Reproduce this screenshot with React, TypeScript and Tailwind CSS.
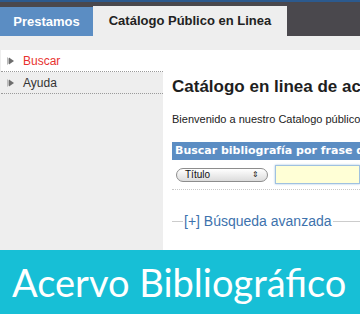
import React from "react";

function Arrow() {
  return (
    <svg width="10" height="10" viewBox="0 0 10 10" className="shrink-0">
      <polygon points="1,1 6,5 1,9" fill="#bbbbbb" />
      <polygon points="3,1.5 8,5 3,8.5" fill="#6d6d6d" />
    </svg>
  );
}

function SideItem({ label, active }: { label: string; active?: boolean }) {
  return (
    <div
      className={`h-[22px] flex items-center gap-[7px] pl-[5px] border-b border-dotted border-[#9a9a9a] text-[12px] ${
        active ? "bg-white text-[#e8322f]" : "text-[#333]"
      }`}
    >
      <Arrow />
      <span>{label}</span>
    </div>
  );
}

export default function App() {
  return (
    <div className="w-[360px] h-[314px] overflow-hidden flex flex-col bg-[#eeeeee] font-['Liberation_Sans',Arial,sans-serif]">
      {/* top tabs */}
      <div className="h-[36px] shrink-0 bg-[#4a484d] border-t-2 border-[#2c5a8e] flex items-end">
        <div className="w-[93px] h-[29px] bg-[#5b8dc3] flex items-center justify-center text-white font-bold text-[13px]">
          Prestamos
        </div>
        <div className="w-[194px] h-[30px] bg-[#eeeeee] flex items-center justify-center text-[#222] font-bold text-[13px]">
          Catálogo Público en Linea
        </div>
      </div>

      <div className="flex-1 flex pt-[14px] min-h-0">
        {/* sidebar */}
        <div className="w-[163px] shrink-0 pl-[1px]">
          <SideItem label="Buscar" active />
          <SideItem label="Ayuda" />
        </div>

        {/* content */}
        <div className="flex-1 bg-white pl-[9px] overflow-hidden">
          <h1 className="mt-[27px] text-[17px] font-bold text-[#1e1e1e] whitespace-nowrap leading-[20px]">
            Catálogo en linea de acervo bibliográfico
          </h1>
          <p className="mt-[15px] text-[11px] text-[#222] whitespace-nowrap leading-[14px]">
            Bienvenido a nuestro Catalogo público del acervo
          </p>
          <div className="mt-[16px] h-[18px] bg-[#5b8dc3] text-white font-bold text-[11px] font-['DejaVu_Sans',Verdana,sans-serif] pl-[3px] flex items-center whitespace-nowrap">
            Buscar bibliografía por frase de búsqueda
          </div>
          <div className="mt-[5px] flex items-center gap-[7px] pl-[4px] pb-[5px] border-b border-dotted border-[#c8c8c8]">
            <div className="w-[92px] h-[14px] rounded-full border border-[#8d8d8d] bg-gradient-to-b from-white to-[#dcdcdc] flex items-center justify-between px-[8px] text-[10px] text-[#111]">
              <span>Título</span>
              <span className="text-[8px] leading-none">⇕</span>
            </div>
            <div className="flex-1 h-[19px] bg-[#ffffd6] border border-[#9fc1e0] shadow-[0_0_2px_#9fc1e0]" />
          </div>
          <div className="mt-[21px] flex items-center">
            <div className="w-[11px] h-px bg-[#cccccc]" />
            <span className="px-[1px] text-[14px] text-[#3d72ad] whitespace-nowrap">[+] Búsqueda avanzada</span>
            <div className="flex-1 h-px bg-[#cccccc]" />
          </div>
        </div>
      </div>

      {/* banner */}
      <div className="h-[64px] shrink-0 bg-[#17bfd6] flex items-center pl-[12px] text-white text-[38px] font-['Lato',sans-serif] whitespace-nowrap">
        Acervo Bibliográfico
      </div>
    </div>
  );
}
